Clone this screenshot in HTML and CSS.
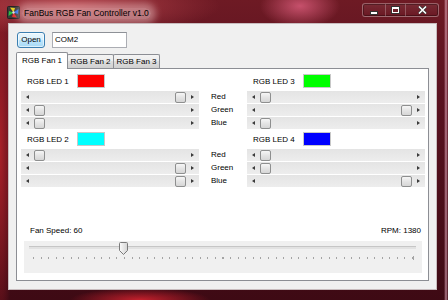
FILE: index.html
```html
<!DOCTYPE html>
<html lang="en">
<head>
    <meta charset="UTF-8">
    <title>FanBus RGB Fan Controller v1.0</title>
    <link rel="stylesheet" href="styles.css">
</head>
<body>
    <div class="window">
        <!-- Title bar -->
        <div class="titlebar">
            <svg class="app-icon" width="13" height="13" viewBox="0 0 13 13">
                <rect x="0.5" y="0.5" width="12" height="12" rx="1" fill="#3a3a3a" stroke="#222"/>
                <path d="M6.5 6.5 L3 1.5 L8 2 Z" fill="#e8d020"/>
                <path d="M6.5 6.5 L11.5 3 L11 8 Z" fill="#2a6ee8"/>
                <path d="M6.5 6.5 L10 11.5 L5 11 Z" fill="#e82828"/>
                <path d="M6.5 6.5 L1.5 10 L2 5 Z" fill="#28c040"/>
                <circle cx="6.5" cy="6.5" r="1.2" fill="#ddd"/>
            </svg>
            <span class="title">FanBus RGB Fan Controller v1.0</span>
            <div class="caption">
                <div class="cap cap-min"><span class="glyph-min"></span></div>
                <div class="cap cap-max"><span class="glyph-max"></span></div>
                <div class="cap cap-close">
                    <svg width="9" height="8" viewBox="0 0 9 8">
                        <path d="M1 0.5 L8 7.5 M8 0.5 L1 7.5" stroke="#333" stroke-width="3"/>
                        <path d="M1 0.5 L8 7.5 M8 0.5 L1 7.5" stroke="#fff" stroke-width="1.6"/>
                    </svg>
                </div>
            </div>
        </div>

        <div class="frame-middle">
            <div class="client">
                <div class="port-row">
                    <div class="open-btn">Open</div>
                    <div class="port-box">COM2</div>
                </div>

                <div class="tabs">
                    <div class="tab active">RGB Fan 1</div>
                    <div class="tab">RGB Fan 2</div>
                    <div class="tab">RGB Fan 3</div>
                </div>

                <div class="tab-page">
                    <!-- LED 1 / LED 3 -->
                    <div class="led-block">
                        <div class="led-head">RGB LED 1 <span class="swatch" style="background:#ff0000"></span></div>
                        <div class="spacer"></div>
                        <div class="led-head">RGB LED 3 <span class="swatch" style="background:#00ff00"></span></div>

                        <div class="hscroll"><i class="arr-l"></i><div class="track"><b class="thumb" style="margin-left:141px"></b></div><i class="arr-r"></i></div>
                        <div class="chan">Red</div>
                        <div class="hscroll"><i class="arr-l"></i><div class="track"><b class="thumb" style="margin-left:0px"></b></div><i class="arr-r"></i></div>

                        <div class="hscroll"><i class="arr-l"></i><div class="track"><b class="thumb" style="margin-left:0px"></b></div><i class="arr-r"></i></div>
                        <div class="chan">Green</div>
                        <div class="hscroll"><i class="arr-l"></i><div class="track"><b class="thumb" style="margin-left:141px"></b></div><i class="arr-r"></i></div>

                        <div class="hscroll"><i class="arr-l"></i><div class="track"><b class="thumb" style="margin-left:0px"></b></div><i class="arr-r"></i></div>
                        <div class="chan">Blue</div>
                        <div class="hscroll"><i class="arr-l"></i><div class="track"><b class="thumb" style="margin-left:0px"></b></div><i class="arr-r"></i></div>
                    </div>

                    <!-- LED 2 / LED 4 -->
                    <div class="led-block">
                        <div class="led-head">RGB LED 2 <span class="swatch" style="background:#00ffff"></span></div>
                        <div class="spacer"></div>
                        <div class="led-head">RGB LED 4 <span class="swatch" style="background:#0000ff"></span></div>

                        <div class="hscroll"><i class="arr-l"></i><div class="track"><b class="thumb" style="margin-left:0px"></b></div><i class="arr-r"></i></div>
                        <div class="chan">Red</div>
                        <div class="hscroll"><i class="arr-l"></i><div class="track"><b class="thumb" style="margin-left:0px"></b></div><i class="arr-r"></i></div>

                        <div class="hscroll"><i class="arr-l"></i><div class="track"><b class="thumb" style="margin-left:141px"></b></div><i class="arr-r"></i></div>
                        <div class="chan">Green</div>
                        <div class="hscroll"><i class="arr-l"></i><div class="track"><b class="thumb" style="margin-left:0px"></b></div><i class="arr-r"></i></div>

                        <div class="hscroll"><i class="arr-l"></i><div class="track"><b class="thumb" style="margin-left:141px"></b></div><i class="arr-r"></i></div>
                        <div class="chan">Blue</div>
                        <div class="hscroll"><i class="arr-l"></i><div class="track"><b class="thumb" style="margin-left:141px"></b></div><i class="arr-r"></i></div>
                    </div>

                    <!-- Fan speed -->
                    <div class="speed-row">
                        <span>Fan Speed: 60</span>
                        <span>RPM: 1380</span>
                    </div>
                    <div class="trackbar">
                        <div class="tb-line"></div>
                        <svg class="tb-thumb" style="left:95px" width="9" height="13" viewBox="0 0 9 13">
                            <defs>
                                <linearGradient id="tg" x1="0" y1="0" x2="1" y2="0">
                                    <stop offset="0" stop-color="#fbfbfb"/>
                                    <stop offset="1" stop-color="#d4d4d4"/>
                                </linearGradient>
                            </defs>
                            <path d="M0.5 1.5 Q0.5 0.5 1.5 0.5 H7.5 Q8.5 0.5 8.5 1.5 V8.5 L4.5 12.5 L0.5 8.5 Z" fill="url(#tg)" stroke="#7a7a7a"/>
                        </svg>
                        <div class="tb-ticks"></div>
                    </div>
                </div>
            </div>
        </div>
    </div>
</body>
</html>
```

FILE: styles.css
```css
body {
    margin: 0;
    width: 448px;
    height: 300px;
    overflow: hidden;
    font-family: "Liberation Sans", Arial, sans-serif;
    font-size: 8px;
    color: #000;
}

.window {
    width: 448px;
    height: 300px;
    display: flex;
    flex-direction: column;
    background:
        radial-gradient(ellipse 40px 22px at 300px 6px, rgba(214, 90, 120, 0.85), transparent),
        radial-gradient(ellipse 150px 30px at 70px 6px, rgba(190, 70, 78, 0.9), transparent),
        radial-gradient(ellipse 70px 12px at 140px 300px, #c4202c, transparent),
        radial-gradient(ellipse 14px 200px at 0px 150px, #a82028, transparent),
        linear-gradient(90deg, transparent 444px, rgba(255, 200, 220, 0.6) 446px, transparent 448px),
        linear-gradient(180deg, #6e1a24 0%, #5a1220 30%, #3e0a14 100%);
}

/* Title bar */
.titlebar {
    height: 23px;
    display: flex;
    align-items: flex-start;
    padding-left: 7px;
}

.app-icon {
    margin-top: 6px;
}

.title {
    margin-top: 8px;
    margin-left: 2px;
    padding: 0 2px;
    font-size: 8.5px;
    line-height: 11px;
    color: #000;
    border-radius: 6px;
    background: rgba(255, 228, 228, 0.42);
    box-shadow: 0 0 7px 5px rgba(255, 225, 225, 0.4);
}

.caption {
    display: flex;
    margin: 3px 9px 0 auto;
    height: 12px;
    border: 1px solid rgba(255, 255, 255, 0.3);
    border-radius: 3px;
    box-shadow: inset 0 0 0 1px rgba(0, 0, 0, 0.3);
    background: linear-gradient(rgba(255, 255, 255, 0.08), rgba(255, 255, 255, 0));
}

.cap {
    display: flex;
    align-items: center;
    justify-content: center;
}

.cap-min { width: 22px; }
.cap-max { width: 19px; border-left: 1px solid rgba(255, 255, 255, 0.25); }
.cap-close { width: 32px; border-left: 1px solid rgba(255, 255, 255, 0.25); }

.glyph-min {
    width: 6px;
    height: 2px;
    margin-top: 5px;
    background: #fff;
    border: 1px solid #333;
}

.glyph-max {
    width: 5px;
    height: 3px;
    border: 1px solid #fff;
    border-top-width: 2px;
    outline: 1px solid #333;
}

/* Client area */
.frame-middle {
    flex: 1;
    display: flex;
    padding: 0 11px 10px 8px;
}

.client {
    flex: 1;
    background: #f0f0f0;
    border: 1px solid #c8bcbe;
    padding: 8px 0 0 7px;
}

.port-row {
    display: flex;
    margin-left: 1px;
    gap: 7px;
}

.open-btn {
    width: 26px;
    height: 14px;
    border: 1px solid #3c7fb1;
    border-radius: 3px;
    background: linear-gradient(#eaf6fd, #d9f0fc 50%, #bee6fd 50%, #a7d9f5);
    box-shadow: inset 0 0 0 1px rgba(255, 255, 255, 0.6);
    text-align: center;
    line-height: 14px;
}

.port-box {
    width: 71px;
    height: 14px;
    border: 1px solid #abadb3;
    border-top-color: #8e9197;
    background: #fff;
    padding-left: 2px;
    line-height: 14px;
}

/* Tabs */
.tabs {
    display: flex;
    align-items: flex-end;
    height: 16px;
    margin-top: 4px;
}

.tab {
    width: 45px;
    height: 13px;
    margin-left: -1px;
    border: 1px solid #8c8e94;
    border-bottom: none;
    border-radius: 2px 2px 0 0;
    background: linear-gradient(#f4f4f4, #ebebeb 50%, #dddddd 50%, #d0d0d0);
    text-align: center;
    line-height: 13px;
}

.tab.active {
    width: 50px;
    height: 16px;
    margin-left: 0;
    margin-bottom: -1px;
    background: #fff;
    line-height: 15px;
    z-index: 1;
}

.tab-page {
    width: 413px;
    height: 213px;
    box-sizing: border-box;
    border: 1px solid #8c8e94;
    background: #fff;
    display: flex;
    flex-direction: column;
    padding: 5px 0 7px 4px;
}

/* LED groups */
.led-block {
    display: grid;
    grid-template-columns: 178px 48px 178px;
    grid-template-rows: 16px 12px 12px 12px;
    row-gap: 1px;
}

.led-block + .led-block {
    margin-top: 3px;
}

.led-head {
    display: flex;
    align-items: center;
    height: 14px;
    padding-left: 6px;
}

.swatch {
    width: 26px;
    height: 12px;
    margin-left: auto;
    margin-right: 94px;
    border: 1px solid #c8c8c8;
}

.chan {
    padding-left: 12px;
    line-height: 12px;
}

.hscroll {
    display: flex;
    align-items: center;
    background: linear-gradient(#e4e4e4, #ededed);
}

.hscroll i {
    width: 13px;
    height: 12px;
    display: flex;
    align-items: center;
    justify-content: center;
}

.arr-l::before,
.arr-r::before {
    content: "";
    border-top: 2.5px solid transparent;
    border-bottom: 2.5px solid transparent;
}

.arr-l::before { border-right: 3px solid #3a3a3a; }
.arr-r::before { border-left: 3px solid #3a3a3a; }

.track {
    flex: 1;
    height: 12px;
    display: flex;
    align-items: center;
}

.thumb {
    width: 9px;
    height: 9px;
    border: 1px solid #8e8f8f;
    border-radius: 2px;
    background: linear-gradient(#f6f6f6, #e4e4e4 50%, #d6d6d6);
}

/* Fan speed */
.speed-row {
    display: flex;
    justify-content: space-between;
    margin-top: auto;
    padding: 0 7px 0 9px;
    line-height: 12px;
    margin-bottom: 4px;
}

.trackbar {
    position: relative;
    width: 398px;
    height: 32px;
    margin-left: 3px;
    background: #f0f0f0;
}

.tb-line {
    margin: 5px 0 0 5px;
    width: 387px;
    height: 2px;
    background: #e2e2e2;
    border-top: 1px solid #c6c6c6;
}

.tb-thumb {
    position: absolute;
    top: 1px;
}

.tb-ticks {
    position: relative;
    margin: 8px 0 0 9px;
    width: 381px;
    height: 2px;
    background: repeating-linear-gradient(90deg, #a4a4a4 0 1px, transparent 1px 7.58px);
}

.tb-ticks::after {
    content: "";
    position: absolute;
    right: 0;
    top: -1px;
    width: 1px;
    height: 4px;
    background: #a4a4a4;
}
```
